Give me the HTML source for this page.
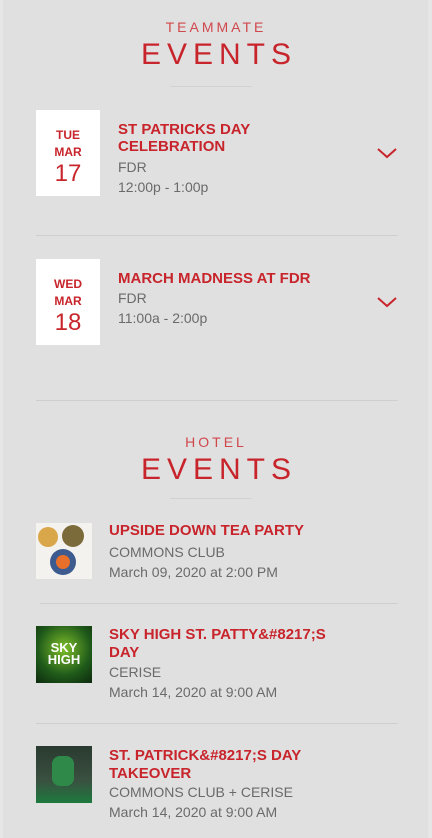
<!DOCTYPE html>
<html><head><style>
body{margin:0;width:432px;height:838px;background:#e6e6e6;overflow:hidden;font-family:"Liberation Sans",sans-serif;}
.pg{position:absolute;left:3px;top:0;width:425px;height:838px;background:#e0e0e0;}
.a{position:absolute;}
.sm{font-size:14px;letter-spacing:3px;text-align:center;width:432px;left:0;color:#d0474c;}
.big{font-size:30px;letter-spacing:6px;text-align:center;width:432px;left:3px;color:#c8242b;}
.ln{height:1px;background:#cfcfcf;}
.box{background:#fff;width:64px;text-align:center;color:#c8242b;font-weight:bold;}
.t{font-size:15px;font-weight:bold;color:#c8242b;line-height:17px;}
.g{font-size:14px;color:#6a6a6a;line-height:20px;}
.ti{font-size:15px;font-weight:bold;color:#c8242b;line-height:20px;}
</style></head><body>
<div class="pg"></div>
<div class="a sm" style="top:19px">TEAMMATE</div>
<div class="a big" style="top:38px">EVENTS</div>
<div class="a ln" style="left:170px;top:86px;width:82px;background:#d2d2d2"></div>

<div class="a box" style="left:36px;top:110px;height:86px">
<div style="font-size:12px;margin-top:17px;line-height:17px">TUE<br>MAR</div>
<div style="font-size:24px;font-weight:normal;line-height:26px">17</div></div>
<div class="a t" style="left:118px;top:121px">ST PATRICKS DAY<br>CELEBRATION</div>
<div class="a g" style="left:118px;top:157px">FDR<br>12:00p - 1:00p</div>
<svg class="a" style="left:376px;top:147px" width="22" height="12"><path d="M2 2 L11 10 L20 2" fill="none" stroke="#c8242b" stroke-width="2"/></svg>
<div class="a ln" style="left:36px;top:235px;width:362px"></div>

<div class="a box" style="left:36px;top:259px;height:86px">
<div style="font-size:12px;margin-top:17px;line-height:17px">WED<br>MAR</div>
<div style="font-size:24px;font-weight:normal;line-height:26px">18</div></div>
<div class="a t" style="left:118px;top:270px">MARCH MADNESS AT FDR</div>
<div class="a g" style="left:118px;top:288px">FDR<br>11:00a - 2:00p</div>
<svg class="a" style="left:376px;top:296px" width="22" height="12"><path d="M2 2 L11 10 L20 2" fill="none" stroke="#c8242b" stroke-width="2"/></svg>
<div class="a ln" style="left:36px;top:400px;width:362px"></div>

<div class="a sm" style="top:434px">HOTEL</div>
<div class="a big" style="top:453px">EVENTS</div>
<div class="a ln" style="left:170px;top:498px;width:82px;background:#d2d2d2"></div>

<div class="a" style="left:36px;top:523px;width:56px;height:56px;background:#f4f2ee;overflow:hidden">
<div class="a" style="left:2px;top:4px;width:20px;height:20px;border-radius:50%;background:#d9a64a"></div>
<div class="a" style="left:26px;top:2px;width:22px;height:22px;border-radius:50%;background:#7b6a3a"></div>
<div class="a" style="left:14px;top:26px;width:26px;height:26px;border-radius:50%;background:#3e5b8f"></div>
<div class="a" style="left:20px;top:32px;width:14px;height:14px;border-radius:50%;background:#e8702a"></div></div>
<div class="a ti" style="left:109px;top:521px">UPSIDE DOWN TEA PARTY</div>
<div class="a g" style="left:109px;top:542px">COMMONS CLUB<br>March 09, 2020 at 2:00 PM</div>
<div class="a ln" style="left:40px;top:603px;width:358px"></div>

<div class="a" style="left:36px;top:626px;width:56px;height:57px;background:radial-gradient(circle at 50% 40%,#7fbf2a,#1f5a1a 60%,#0d2a0d)"><div style="color:#fff;font-weight:bold;font-size:13px;text-align:center;margin-top:16px;line-height:12px">SKY<br>HIGH</div></div>
<div class="a ti" style="left:109px;top:626px;line-height:18px">SKY HIGH ST. PATTY&amp;#8217;S<br>DAY</div>
<div class="a g" style="left:109px;top:662px">CERISE<br>March 14, 2020 at 9:00 AM</div>
<div class="a ln" style="left:36px;top:723px;width:362px"></div>

<div class="a" style="left:36px;top:746px;width:56px;height:57px;background:linear-gradient(#2a3a30,#3a5040 60%,#1d7a3e)"><div class="a" style="left:16px;top:10px;width:22px;height:30px;background:#2f8a4a;border-radius:8px"></div></div>
<div class="a ti" style="left:109px;top:747px;line-height:18px">ST. PATRICK&amp;#8217;S DAY<br>TAKEOVER</div>
<div class="a g" style="left:109px;top:782px">COMMONS CLUB + CERISE<br>March 14, 2020 at 9:00 AM</div>
</body></html>
